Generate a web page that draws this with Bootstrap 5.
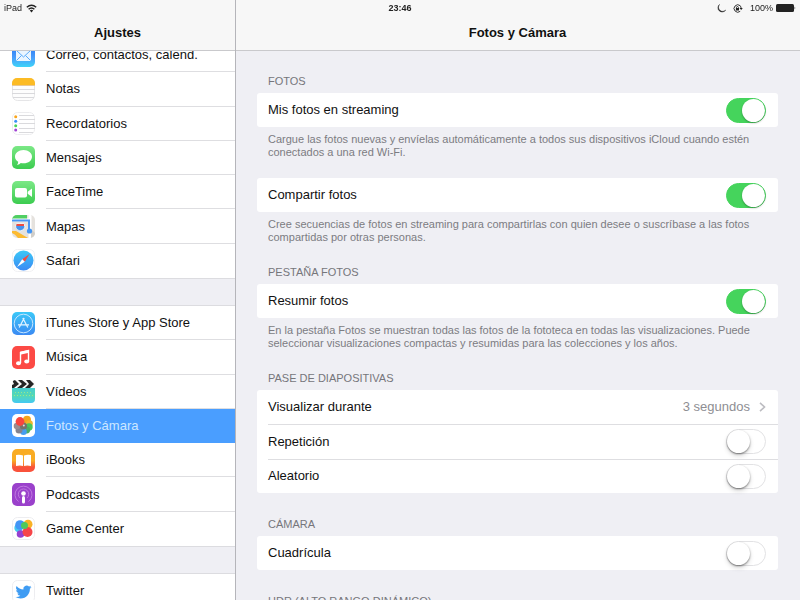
<!DOCTYPE html>
<html lang="es">
<head>
<meta charset="utf-8">
<meta name="viewport" content="width=device-width, initial-scale=1">
<title>Ajustes</title>
<link href="https://cdn.jsdelivr.net/npm/bootstrap@5.3.0/dist/css/bootstrap.min.css" rel="stylesheet">
<style>
body{font-family:"Liberation Sans",Arial,sans-serif;font-size:13px;line-height:16px;color:#111;background:#efeff4}
.statusbar{grid-template-columns:1fr auto 1fr;padding:0 4px;height:16px;font-size:9px;z-index:1040;color:#222}
.status-end{gap:3px}
.sidebar{flex:0 0 235px;box-shadow:1px 0 0 #b5b5ba;position:relative;z-index:3}
.titlebar{height:51px;padding-top:17px;background:#f7f7f7;border-bottom:1px solid #c9c9cc;font-size:13px;line-height:32px;font-weight:bold;text-align:center;position:relative;z-index:2}
.pane-scroll{scrollbar-width:none}
.pane-scroll::-webkit-scrollbar{display:none}
.menu{display:grid;grid-auto-rows:1fr;background:#fff;border-top:1px solid #dcdce0;box-shadow:0 1px 0 #dcdce0;margin-bottom:27px}
.menu-seven{min-height:241px}
.menu-scrolled{margin-top:-14px}
.menu-item{display:flex;align-items:center;gap:11px;padding-left:12px;min-height:34px;color:#111;text-decoration:none}
.menu-item svg{flex:none;width:23px;height:23px}
.menu-item span{flex:1;align-self:stretch;display:flex;align-items:center;padding-top:1px;border-bottom:1px solid #dedee1}
.menu-item:last-child span{border-bottom-color:transparent}
.menu-item.selected{background:#4a9eff;color:#cde7ff}
.menu-item.selected span{border-color:transparent}
.settings{padding:24px 22px 0}
.sec-title{font-size:11px;line-height:13px;font-weight:normal;color:#76767b;padding:0 11px;margin:0 0 5px}
.sec-note{font-size:11px;line-height:13px;color:#7c7c82;padding:6px 11px 0;margin:0}
.panel{background:#fff;border-radius:3px;display:grid;grid-auto-rows:1fr}
.panel-three{min-height:103px}
.panel-row{min-height:34px;margin-left:11px;padding-right:12px;display:flex;align-items:center;justify-content:space-between}
.panel-row + .panel-row{border-top:1px solid #dedee1}
.panel-row label{flex:1}
.sec-after{margin-top:25px}
.sec-after-note{margin-top:22px}
.sec-bare{margin-top:19px}
.form-check-input.toggle{width:40px;height:25px;margin:0;border:1px solid #e2e2e4;border-radius:13px;background:#fff;box-shadow:none;flex:none}
.toggle::before{content:"";display:block;width:23px;height:23px;border-radius:50%;background:#fff;box-shadow:0 1px 2px rgba(0,0,0,.45),0 3px 5px rgba(0,0,0,.14)}
.form-check-input.toggle:checked{background:#45d45c;border-color:#45d45c}
.toggle:checked::before{margin-left:15px;box-shadow:0 1px 2px rgba(0,0,0,.3)}
.value-btn{border:0;background:none;padding:0;color:#8e8e93;display:flex;align-items:center;gap:9px}
</style>
<script src="https://cdn.jsdelivr.net/npm/bootstrap@5.3.0/dist/js/bootstrap.bundle.min.js"></script>
</head>
<body>
<div class="statusbar fixed-top d-grid align-items-center">
  <div class="d-flex align-items-center gap-1">iPad
    <svg width="11" height="9" viewBox="0 0 11 9" fill="none" stroke="#222" stroke-width="1.4"><path d="M.8 3.3Q5.500-1 10.200 3.300M2.600 5.200Q5.500 2.600 8.400 5.200"/><path d="M3.800 6.400Q5.500 5 7.200 6.400L5.500 8.400Z" fill="#222" stroke="none"/></svg>
  </div>
  <b>23:46</b>
  <div class="status-end d-flex align-items-center justify-content-end">
    <svg width="9" height="9" viewBox="0 0 9 9"><path d="M2.500 .5A4.200 4.200 0 1 0 8.700 6A4 4 0 0 1 2.500 .5Z" fill="#222" stroke="#222" stroke-width=".5"/></svg>
    <svg class="ms-1" width="10" height="9" viewBox="0 0 10 9"><path d="M7.200 1.700A3.700 3.700 0 1 0 7.200 7.300" fill="none" stroke="#333"/><path d="M7 1.600A3.700 3.700 0 0 1 8.100 4.400" fill="none" stroke="#333"/><path d="M6.500 4H9.800L8.200 6Z M2.900 4H6V6.400H2.900Z" fill="#222"/><path d="M3.500 4V3.200A1 1 0 0 1 5.400 3.200V4" fill="none" stroke="#222" stroke-width=".8"/></svg>
    <span class="ms-1">100%</span>
    <svg width="20" height="8" viewBox="0 0 20 8"><rect width="18" height="8" rx="1.500" fill="#222"/><path d="M18.600 2.500Q20 4 18.600 5.500Z" fill="#222"/></svg>
  </div>
</div>

<div class="d-flex vh-100 overflow-hidden">
  <nav class="sidebar d-flex flex-column" aria-label="Ajustes">
    <h1 class="titlebar m-0 flex-shrink-0">Ajustes</h1>
    <div class="pane-scroll flex-fill overflow-auto">
      <div class="menu menu-seven menu-scrolled">
        <a class="menu-item" href="#correo"><svg viewBox="0 0 23 23"><defs><linearGradient id="mail" x2="0" y2="1"><stop stop-color="#2573f2"/><stop offset=".6" stop-color="#4a9dfb"/><stop offset="1" stop-color="#3dd4f8"/></linearGradient></defs><rect width="23" height="23" rx="5" fill="url(#mail)"/><rect x="4" y="6" width="15" height="11" rx="1" fill="#eaf5ff"/><path d="M4.500 6.500L11.500 13L18.500 6.500M4.500 16.500L9.500 11.500M18.500 16.500L13.500 11.500" fill="none" stroke="#59aafb"/></svg><span>Correo, contactos, calend.</span></a>
        <a class="menu-item" href="#notas"><svg viewBox="0 0 23 23"><rect x=".5" y=".5" width="22" height="22" rx="5" fill="#fdfdfd" stroke="#e5e5e7"/><path d="M0 7V5A5 5 0 0 1 5 0H18A5 5 0 0 1 23 5V7Z" fill="#fcbb24"/><path d="M0 7.500H23" stroke="#e9c791"/><path d="M0 11.500H23M0 15.500H23M1 19.500H22" stroke="#d9d9dc"/></svg><span>Notas</span></a>
        <a class="menu-item" href="#recordatorios"><svg viewBox="0 0 23 23"><rect x=".5" y=".5" width="22" height="22" rx="5" fill="#fff" stroke="#ececee"/><path d="M7 3.500H22M7 7.500H23M7 11.500H23M7 16.500H23M7 20.500H21" stroke="#dadadd"/><circle cx="3.700" cy="4.800" r="1.500" fill="#f9a51c"/><circle cx="3.700" cy="9.200" r="1.500" fill="#3b91f7"/><circle cx="3.700" cy="13.700" r="1.500" fill="#48d45c"/><circle cx="3.700" cy="18" r="1.500" fill="#a042d4"/></svg><span>Recordatorios</span></a>
        <a class="menu-item" href="#mensajes"><svg viewBox="0 0 23 23"><defs><linearGradient id="grass" x2="0" y2="1"><stop stop-color="#7be886"/><stop offset="1" stop-color="#3ccc50"/></linearGradient></defs><rect width="23" height="23" rx="5" fill="url(#grass)"/><path d="M11.500 4C16.500 4 20 7 20 10.700S16.500 17.300 11.500 17.300Q10 17.300 8.800 17Q7.500 18.700 5 19Q6.200 17.500 6.200 15.800Q3 13.900 3 10.700C3 7 6.500 4 11.500 4Z" fill="#fff"/></svg><span>Mensajes</span></a>
        <a class="menu-item" href="#facetime"><svg viewBox="0 0 23 23"><rect width="23" height="23" rx="5" fill="url(#grass)"/><rect x="3" y="7" width="12" height="9.500" rx="2" fill="#fff"/><path d="M15.700 10.800L20 7.500V16L15.700 12.800Z" fill="#fff"/></svg><span>FaceTime</span></a>
        <a class="menu-item" href="#mapas"><svg viewBox="0 0 23 23"><defs><clipPath id="mapclip"><rect width="23" height="23" rx="5"/></clipPath></defs><g clip-path="url(#mapclip)"><rect width="23" height="23" fill="#e5e2de"/><path d="M0 0H15V4H0Z" fill="#50cf63"/><path d="M18 0V23M0 5H18" stroke="#fff" stroke-width="3"/><path d="M0 16H4L16 23H6Q3 19 0 18Z" fill="#fcbb32"/><path d="M19 14L23 18V23H19Z" fill="#d0ceca"/><path d="M0 5.500H17V15" fill="none" stroke="#4795f4" stroke-width="2"/><circle cx="17.500" cy="16" r="2.600" fill="#4295f5"/><path d="M4.500 9H12L13 12Q12 15.500 8 16Q4 15 3.500 12Z" fill="#4493ee" stroke="#fff" stroke-width=".8"/><path d="M4.500 9H12V11H4.300Z" fill="#ed4b41"/></g></svg><span>Mapas</span></a>
        <a class="menu-item" href="#safari"><svg viewBox="0 0 23 23"><defs><linearGradient id="sea" x2="0" y2="1"><stop stop-color="#3bc8f8"/><stop offset="1" stop-color="#3b8af3"/></linearGradient></defs><rect x=".5" y=".5" width="22" height="22" rx="5" fill="#fff" stroke="#f0f0f2"/><circle cx="11.500" cy="11.500" r="10" fill="url(#sea)"/><path d="M17.500 5L10.200 10.200L12.800 12.800Z" fill="#f34d42"/><path d="M5 18L10.200 10.200L12.800 12.800Z" fill="#fff"/></svg><span>Safari</span></a>
      </div>
      <div class="menu menu-seven">
        <a class="menu-item" href="#store"><svg viewBox="0 0 23 23"><rect width="23" height="23" rx="5" fill="url(#sea)"/><circle cx="11.500" cy="11.500" r="9.300" fill="none" stroke="#c5e6ff"/><path d="M12.200 6L7.200 15.500M10.800 6L15.800 15.500M6 12.800H17" fill="none" stroke="#e3f4ff" stroke-width="1.200"/></svg><span>iTunes Store y App Store</span></a>
        <a class="menu-item" href="#musica"><svg viewBox="0 0 23 23"><rect width="23" height="23" rx="5" fill="#fc4a45"/><path d="M8.500 17V6.500L16.500 4.600V15" fill="none" stroke="#fff" stroke-width="1.400"/><path d="M8 5.800L17 3.700V6.800L8 8.800Z" fill="#fff"/><ellipse cx="6.500" cy="17.200" rx="2.500" ry="2" fill="#fff"/><ellipse cx="14.700" cy="15.500" rx="2.500" ry="2" fill="#fff"/></svg><span>Música</span></a>
        <a class="menu-item" href="#videos"><svg viewBox="0 0 23 23"><defs><linearGradient id="clap" x2="0" y2="1"><stop stop-color="#45cdd0"/><stop offset=".5" stop-color="#55d8b4"/><stop offset="1" stop-color="#43c9f4"/></linearGradient><clipPath id="clapclip"><rect width="23" height="23" rx="4"/></clipPath></defs><g clip-path="url(#clapclip)"><rect width="23" height="23" fill="#fafafa"/><path d="M0 0H3L7 4L2 8H0V5L2 4ZM6 0H10L15 4L10 8H5L10 4ZM14 0H18L22 4L18 8H13L17 4Z" fill="#252525"/><rect y="8" width="23" height="15" fill="url(#clap)"/><path d="M3 12.500H21M2 15.500H21" stroke="#9be88b" stroke-dasharray="1 2"/></g></svg><span>Vídeos</span></a>
        <a class="menu-item selected" href="#fotos" aria-current="page"><svg viewBox="0 0 23 23"><rect width="23" height="23" rx="5" fill="#fff"/><circle cx="15" cy="5.800" r="4" fill="#f6a51c"/><circle cx="17.500" cy="9.500" r="3.300" fill="#f0b52b"/><circle cx="17" cy="13" r="3.700" fill="#49c75b"/><circle cx="14.700" cy="16" r="3.400" fill="#4bad63"/><circle cx="11.500" cy="17.700" r="3.300" fill="#479df0"/><circle cx="7" cy="16" r="3.500" fill="#85838e"/><circle cx="5" cy="12" r="3.300" fill="#9a8c90"/><circle cx="11.500" cy="12" r="3.600" fill="#77716a"/><circle cx="8" cy="7.500" r="4.400" fill="#f9453f"/><circle cx="11.800" cy="11.500" r="1" fill="#ddd"/></svg><span>Fotos y Cámara</span></a>
        <a class="menu-item" href="#ibooks"><svg viewBox="0 0 23 23"><defs><linearGradient id="book" x2="0" y2="1"><stop offset=".5" stop-color="#f9ac23"/><stop offset=".8" stop-color="#f9523b"/></linearGradient></defs><rect width="23" height="23" rx="5" fill="url(#book)"/><path d="M4 6Q8 5.200 11 6.500V17Q8 16 4 17ZM12 6.500Q15 5.200 19 6V17Q15 16 12 17Z" fill="#fff"/></svg><span>iBooks</span></a>
        <a class="menu-item" href="#podcasts"><svg viewBox="0 0 23 23"><rect width="23" height="23" rx="5" fill="#9a41cb"/><g fill="none" stroke="#c07ae0"><path d="M6.500 18.500A8.500 8.500 0 1 1 16.500 18.500"/><path d="M8 15A5.200 5.200 0 1 1 15 15"/></g><circle cx="11.500" cy="10.500" r="2.300" fill="#fff"/><rect x="10" y="13" width="3" height="7.500" rx="1.500" fill="#fff"/></svg><span>Podcasts</span></a>
        <a class="menu-item" href="#gamecenter"><svg viewBox="0 0 23 23"><rect x=".5" y=".5" width="22" height="22" rx="5" fill="#fff" stroke="#ededf0"/><circle cx="16" cy="7.300" r="4.500" fill="#f9b226"/><circle cx="6.500" cy="11" r="4.200" fill="#43c9f1"/><circle cx="8" cy="8" r="4.800" fill="#4295f5"/><circle cx="8.500" cy="17" r="3.800" fill="#9640d0"/><circle cx="15.500" cy="15" r="5" fill="#f64549"/><circle cx="12.500" cy="8.500" r="3.500" fill="#4fc95c"/></svg><span>Game Center</span></a>
      </div>
      <div class="menu">
        <a class="menu-item" href="#twitter"><svg viewBox="0 0 23 23"><rect x=".5" y=".5" width="22" height="22" rx="5" fill="#fff" stroke="#ededf0"/><path transform="translate(3.500 3.500)" d="M5.030 15c6.040 0 9.340-5 9.340-9.330v-.42A6.700 6.700 0 0 0 16 3.540a6.600 6.600 0 0 1-1.880.52 3.300 3.300 0 0 0 1.440-1.820 6.600 6.600 0 0 1-2.090.79A3.290 3.290 0 0 0 7.880 6.030 9.320 9.320 0 0 1 1.110 2.600a3.290 3.290 0 0 0 1.020 4.380A3.200 3.200 0 0 1 .64 6.580v.04a3.290 3.290 0 0 0 2.630 3.220 3.200 3.200 0 0 1-1.480.06 3.290 3.290 0 0 0 3.070 2.280A6.600 6.600 0 0 1 .78 13.580 6.300 6.300 0 0 1 0 13.540 9.300 9.300 0 0 0 5.030 15" fill="#3f9cf3"/></svg><span>Twitter</span></a>
      </div>
    </div>
  </nav>

  <main class="flex-fill d-flex flex-column">
    <h2 class="titlebar m-0 flex-shrink-0">Fotos y Cámara</h2>
    <div class="settings pane-scroll flex-fill overflow-auto">
      <section>
        <h3 class="sec-title">FOTOS</h3>
        <div class="panel"><div class="panel-row"><label for="streaming">Mis fotos en streaming</label><input class="form-check-input toggle" type="checkbox" role="switch" id="streaming" checked></div></div>
        <p class="sec-note">Cargue las fotos nuevas y envíelas automáticamente a todos sus dispositivos iCloud cuando estén conectados a una red Wi-Fi.</p>
      </section>
      <section class="sec-bare">
        <div class="panel"><div class="panel-row"><label for="compartir">Compartir fotos</label><input class="form-check-input toggle" type="checkbox" role="switch" id="compartir" checked></div></div>
        <p class="sec-note">Cree secuencias de fotos en streaming para compartirlas con quien desee o suscríbase a las fotos compartidas por otras personas.</p>
      </section>
      <section class="sec-after-note">
        <h3 class="sec-title">PESTAÑA FOTOS</h3>
        <div class="panel"><div class="panel-row"><label for="resumir">Resumir fotos</label><input class="form-check-input toggle" type="checkbox" role="switch" id="resumir" checked></div></div>
        <p class="sec-note">En la pestaña Fotos se muestran todas las fotos de la fototeca en todas las visualizaciones. Puede seleccionar visualizaciones compactas y resumidas para las colecciones y los años.</p>
      </section>
      <section class="sec-after-note">
        <h3 class="sec-title">PASE DE DIAPOSITIVAS</h3>
        <div class="panel panel-three">
          <div class="panel-row"><label for="durante">Visualizar durante</label><button class="value-btn" id="durante" type="button">3 segundos<svg width="7" height="10" viewBox="0 0 7 10" fill="none" stroke="#bcbcc1" stroke-width="1.600"><path d="M1 .8L5.500 5L1 9.200"/></svg></button></div>
          <div class="panel-row"><label for="repeticion">Repetición</label><input class="form-check-input toggle" type="checkbox" role="switch" id="repeticion"></div>
          <div class="panel-row"><label for="aleatorio">Aleatorio</label><input class="form-check-input toggle" type="checkbox" role="switch" id="aleatorio"></div>
        </div>
      </section>
      <section class="sec-after">
        <h3 class="sec-title">CÁMARA</h3>
        <div class="panel"><div class="panel-row"><label for="cuadricula">Cuadrícula</label><input class="form-check-input toggle" type="checkbox" role="switch" id="cuadricula"></div></div>
      </section>
      <section class="sec-after">
        <h3 class="sec-title">HDR (ALTO RANGO DINÁMICO)</h3>
      </section>
    </div>
  </main>
</div>
</body>
</html>
